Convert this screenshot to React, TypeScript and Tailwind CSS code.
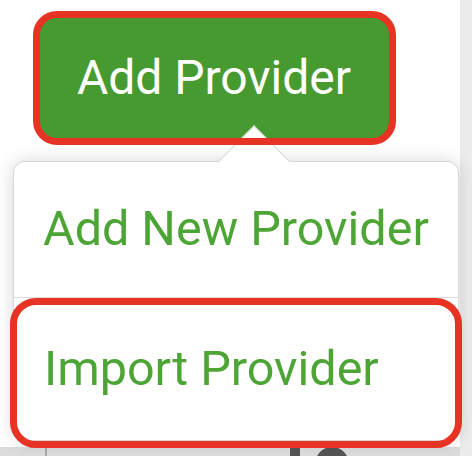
import React from "react";

export default function App() {
  return (
    <div
      className="relative w-[472px] h-[456px] overflow-hidden bg-white"
      style={{ fontFamily: "Roboto, 'Noto Sans', sans-serif" }}
    >
      <div className="flex h-full">
        <div className="flex flex-1 flex-col">
          <div className="flex-1 pl-[36px] pt-[14px]">
            <button className="flex h-[128px] w-[356px] items-center justify-center rounded-[18px] bg-[#479a2f] text-[48px] leading-none text-white">
              Add Provider
            </button>
          </div>
          <div className="flex h-[9px] items-start overflow-hidden bg-[#dcdcdc] pl-[45px]">
            <div className="h-full w-[2px] bg-[#a9a9a9]" />
            <div className="ml-[243px] h-full w-[10px] bg-[#555]" />
            <div className="ml-[15px] h-[40px] w-[34px] shrink-0 rounded-full bg-[#555]" />
          </div>
        </div>
        <div className="w-[12px] bg-[#ececec]" />
      </div>

      {/* dropdown menu */}
      <div className="absolute left-[13px] top-[161px] flex h-[280px] w-[446px] flex-col rounded-[12px] border-[1.5px] border-[#d6d6d6] bg-white text-[48.5px] leading-none text-[#4ca535] shadow-[0_0_18px_rgba(0,0,0,0.16)]">
        <div className="flex h-[136px] items-center border-b-[1.5px] border-[#dcdcdc] pl-[29px]">
          Add New Provider
        </div>
        <div className="flex flex-1 items-center pl-[30px]">Import Provider</div>
      </div>

      {/* caret */}
      <div className="absolute left-[228px] top-[136px] h-[52px] w-[52px] rotate-45 border-l-[1.5px] border-t-[1.5px] border-[#d6d6d6] bg-white" />

      {/* annotation boxes */}
      <div className="pointer-events-none absolute left-[33px] top-[11px] h-[134px] w-[363px] rounded-[24px] border-[7px] border-[#e63323]" />
      <div className="pointer-events-none absolute left-[10px] top-[298px] h-[150px] w-[452px] rounded-[26px] border-[7px] border-[#e63323]" />
    </div>
  );
}
